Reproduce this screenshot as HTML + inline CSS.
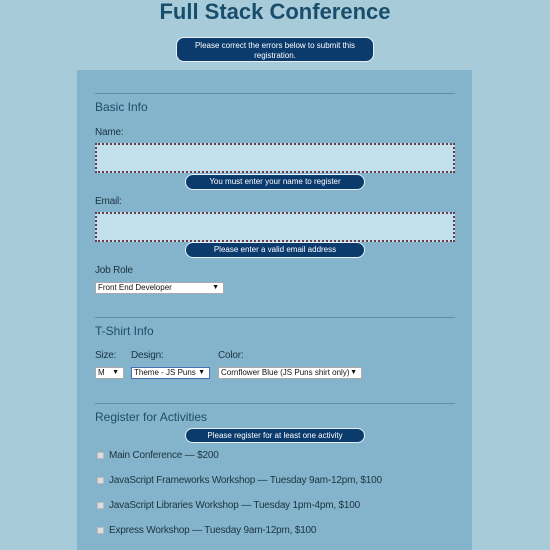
<!DOCTYPE html>
<html><head><meta charset="utf-8"><style>
*{margin:0;padding:0;box-sizing:border-box}
body{width:550px;height:538px;overflow:hidden;background:#a8cbd9;font-family:"Liberation Sans",sans-serif;color:#1c3341;position:relative}
h1{position:absolute;left:0;width:550px;top:-1px;text-align:center;font-size:22px;font-weight:bold;color:#184e6b}
.panel{position:absolute;left:77px;top:70px;width:395px;height:480px;background:#83b4cb}
.pill{position:absolute;background:#0b3a6d;border:1px solid #e6f0f5;color:#fff;font-size:8px;text-align:center;border-radius:8px}
.hr{position:absolute;left:95px;width:360px;height:1px;background:#5f8fa6}
.h{position:absolute;left:95px;font-size:12px;color:#1d4e68;white-space:nowrap}
.l{position:absolute;font-size:10px;color:#1c3341;white-space:nowrap;letter-spacing:-0.2px}
.inp{position:absolute;left:95px;width:360px;height:30px;background:#c2e0ec;border:2px dotted #6a3a4a}
.sel{position:absolute;height:12px;background:#fff;border:1px solid #aaa;font-size:8px;line-height:10px;padding-left:2px;color:#111;white-space:nowrap}
.sel span{position:absolute;right:4px;top:0;font-size:7px}
.cb{position:absolute;left:97px;width:7px;height:7px;background:#ddd;border:1px solid #bbb}
</style></head><body>
<h1>Full Stack Conference</h1>
<div class="pill" style="left:176px;top:37px;width:198px;height:25px;padding-top:3px;line-height:10px">Please correct the errors below to submit this registration.</div>
<div class="panel"></div>
<div class="hr" style="top:93px"></div>
<div class="h" style="top:100px">Basic Info</div>
<div class="l" style="left:95px;top:127px">Name:</div>
<div class="inp" style="top:143px"></div>
<div class="pill" style="left:185px;top:174px;width:180px;height:16px;line-height:14px">You must enter your name to register</div>
<div class="l" style="left:95px;top:196px">Email:</div>
<div class="inp" style="top:212px"></div>
<div class="pill" style="left:185px;top:242px;width:180px;height:16px;line-height:14px">Please enter a valid email address</div>
<div class="l" style="left:95px;top:265px">Job Role</div>
<div class="sel" style="left:95px;top:282px;width:129px">Front End Developer<span>▼</span></div>
<div class="hr" style="top:317px"></div>
<div class="h" style="top:324px">T-Shirt Info</div>
<div class="l" style="left:95px;top:350px">Size:</div>
<div class="l" style="left:131px;top:350px">Design:</div>
<div class="l" style="left:218px;top:350px">Color:</div>
<div class="sel" style="left:95px;top:367px;width:29px">M<span>▼</span></div>
<div class="sel" style="left:131px;top:367px;width:79px;border-color:#4a6fb0">Theme - JS Puns<span>▼</span></div>
<div class="sel" style="left:218px;top:367px;width:144px">Cornflower Blue (JS Puns shirt only)<span>▼</span></div>
<div class="hr" style="top:403px"></div>
<div class="h" style="top:410px">Register for Activities</div>
<div class="pill" style="left:185px;top:428px;width:180px;height:15px;line-height:13px">Please register for at least one activity</div>
<div class="cb" style="top:452px"></div><div class="l" style="left:109px;top:450px">Main Conference — $200</div>
<div class="cb" style="top:477px"></div><div class="l" style="left:109px;top:475px">JavaScript Frameworks Workshop — Tuesday 9am-12pm, $100</div>
<div class="cb" style="top:502px"></div><div class="l" style="left:109px;top:500px">JavaScript Libraries Workshop — Tuesday 1pm-4pm, $100</div>
<div class="cb" style="top:527px"></div><div class="l" style="left:109px;top:525px">Express Workshop — Tuesday 9am-12pm, $100</div>
</body></html>
